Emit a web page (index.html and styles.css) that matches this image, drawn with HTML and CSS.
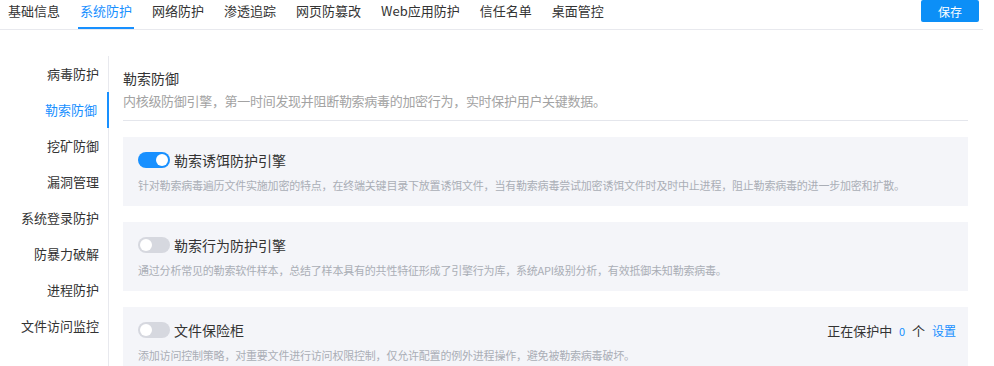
FILE: index.html
```html
<!DOCTYPE html>
<html lang="zh-CN">
<head>
    <meta charset="UTF-8">
    <title>系统防护</title>
    <link rel="stylesheet" href="styles.css">
</head>
<body>
<div class="topbar">
    <div class="tabs">
        <span class="tab">基础信息</span>
        <span class="tab active">系统防护</span>
        <span class="tab">网络防护</span>
        <span class="tab">渗透追踪</span>
        <span class="tab">网页防篡改</span>
        <span class="tab">Web应用防护</span>
        <span class="tab">信任名单</span>
        <span class="tab">桌面管控</span>
    </div>
    <button type="button" class="save-btn">保存</button>
</div>

<div class="main">
    <ul class="side-menu">
        <li>病毒防护</li>
        <li class="active">勒索防御</li>
        <li>挖矿防御</li>
        <li>漏洞管理</li>
        <li>系统登录防护</li>
        <li>防暴力破解</li>
        <li>进程防护</li>
        <li>文件访问监控</li>
    </ul>

    <div class="content">
        <div class="section-head">
            <div class="section-title">勒索防御</div>
            <div class="section-desc">内核级防御引擎，第一时间发现并阻断勒索病毒的加密行为，实时保护用户关键数据。</div>
        </div>

        <div class="card">
            <div class="card-head">
                <span class="switch on"></span>
                <span class="card-title">勒索诱饵防护引擎</span>
            </div>
            <div class="card-desc">针对勒索病毒遍历文件实施加密的特点，在终端关键目录下放置诱饵文件，当有勒索病毒尝试加密诱饵文件时及时中止进程，阻止勒索病毒的进一步加密和扩散。</div>
        </div>

        <div class="card">
            <div class="card-head">
                <span class="switch"></span>
                <span class="card-title">勒索行为防护引擎</span>
            </div>
            <div class="card-desc">通过分析常见的勒索软件样本，总结了样本具有的共性特征形成了引擎行为库，系统API级别分析，有效抵御未知勒索病毒。</div>
        </div>

        <div class="card">
            <div class="card-head">
                <span class="switch"></span>
                <span class="card-title">文件保险柜</span>
                <span class="protect-info">
                    正在保护中 <span class="count">0</span> 个 <a class="link">设置</a>
                </span>
            </div>
            <div class="card-desc">添加访问控制策略，对重要文件进行访问权限控制，仅允许配置的例外进程操作，避免被勒索病毒破坏。</div>
        </div>
    </div>
</div>
</body>
</html>
```

FILE: styles.css
```css
body {
    margin: 0;
    font-family: "Noto Sans CJK SC", "Liberation Sans", sans-serif;
    color: #333;
    background-color: #fff;
    overflow: hidden;
}

.topbar {
    display: flex;
    align-items: flex-start;
    justify-content: space-between;
    width: 983px;
    height: 29px;
    border-bottom: 1px solid #e8e9ee;
}

.tabs {
    display: flex;
    padding-left: 6px;
    gap: 16px;
}

.tab {
    font-size: 13px;
    line-height: 22px;
    padding: 0 2px;
    height: 27px;
    color: #333;
}

.tab.active {
    color: #1890ff;
    border-bottom: 2px solid #1890ff;
}

.save-btn {
    margin-right: 4px;
    width: 58px;
    height: 22px;
    border: none;
    border-radius: 2px;
    background-color: #0c8ff7;
    color: #fff;
    font-family: inherit;
    font-size: 12px;
    padding: 0;
}

.main {
    display: flex;
    padding-top: 26px;
}

.side-menu {
    list-style: none;
    margin: 0;
    padding: 0;
    width: 108px;
    border-right: 1px solid #e8e9ee;
}

.side-menu li {
    height: 36px;
    line-height: 36px;
    font-size: 13px;
    text-align: right;
    padding-right: 9px;
    color: #333;
}

.side-menu li.active {
    color: #1890ff;
    margin-right: -1px;
    padding-right: 10px;
    border-right: 2px solid #1890ff;
}

.content {
    width: 845px;
    margin-left: 14px;
    padding-top: 12px;
}

.section-head {
    padding-bottom: 9px;
    border-bottom: 1px solid #e4e6ec;
    margin-bottom: 16px;
}

.section-title {
    font-size: 14px;
    line-height: 20px;
    color: #333;
    margin-bottom: 3px;
}

.section-desc {
    font-size: 13px;
    line-height: 20px;
    letter-spacing: -0.3px;
    color: #a3a3a3;
}

.card {
    background-color: #f4f5f9;
    padding: 15px 12px 11px 15px;
    margin-bottom: 16px;
}

.card-head {
    display: flex;
    align-items: center;
    height: 16px;
}

.switch {
    position: relative;
    width: 32px;
    height: 16px;
    border-radius: 8px;
    background-color: #d6d8df;
    margin-right: 4px;
}

.switch::after {
    content: "";
    position: absolute;
    top: 2px;
    left: 2px;
    width: 12px;
    height: 12px;
    border-radius: 50%;
    background-color: #fff;
}

.switch.on {
    background-color: #1890ff;
}

.switch.on::after {
    left: 18px;
}

.card-title {
    font-size: 14px;
    line-height: 16px;
    color: #333;
}

.protect-info {
    margin-left: auto;
    font-size: 13px;
    color: #333;
}

.count {
    color: #1890ff;
    font-size: 11px;
    margin: 0 4px;
}

.link {
    color: #1890ff;
    font-size: 12px;
    margin-left: 4px;
}

.card-desc {
    margin-top: 7px;
    font-size: 11px;
    line-height: 20px;
    letter-spacing: -0.2px;
    color: #aaaeb6;
    white-space: nowrap;
}
```
